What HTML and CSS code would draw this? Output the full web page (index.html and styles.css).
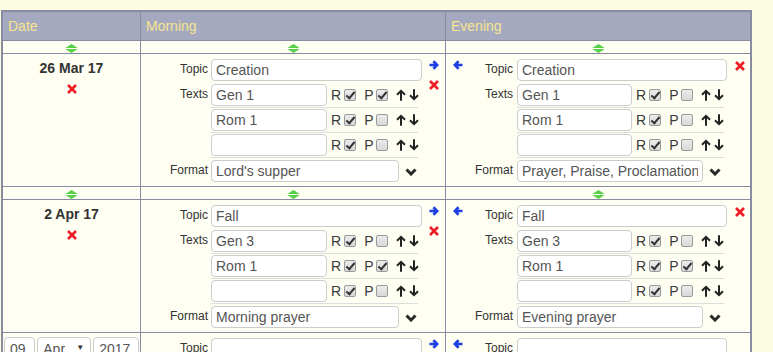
FILE: index.html
```html
<!DOCTYPE html>
<html lang="en">
<head>
    <meta charset="UTF-8">
    <title>Service Plan</title>
    <link rel="stylesheet" href="styles.css">
</head>
<body>
    <svg class="defs" xmlns="http://www.w3.org/2000/svg">
        <symbol id="i-move" viewBox="0 0 13 9"><path d="M0.3 3.9L6.5 0 12.7 3.9Z M0.3 5.1L6.5 9 12.7 5.1Z" fill="currentColor"/></symbol>
        <symbol id="i-right" viewBox="0 0 10 10"><path d="M0.5 5H8.2M4.4 1.2L8.2 5 4.4 8.8" fill="none" stroke="currentColor" stroke-width="2.7"/></symbol>
        <symbol id="i-left" viewBox="0 0 10 10"><path d="M9.5 5H1.8M5.6 1.2L1.8 5 5.6 8.8" fill="none" stroke="currentColor" stroke-width="2.7"/></symbol>
        <symbol id="i-del" viewBox="0 0 10 10"><path d="M1 1L9 9M9 1L1 9" fill="none" stroke="currentColor" stroke-width="2.6"/></symbol>
        <symbol id="i-up" viewBox="0 0 10 12"><path d="M5 11.8V1.8M1 5.8L5 1.8 9 5.8" fill="none" stroke="currentColor" stroke-width="2"/></symbol>
        <symbol id="i-down" viewBox="0 0 10 12"><path d="M5 0.2V10.2M1 6.2L5 10.2 9 6.2" fill="none" stroke="currentColor" stroke-width="2"/></symbol>
        <symbol id="i-chev" viewBox="0 0 12 8"><path d="M1.5 1.5L6 6 10.5 1.5" fill="none" stroke="currentColor" stroke-width="3"/></symbol>
    </svg>

    <table class="plan">
        <thead>
            <tr><th class="c-date">Date</th><th class="c-am">Morning</th><th class="c-pm">Evening</th></tr>
        </thead>
        <tbody>
            <tr class="mover">
                <td><svg class="mv"><use href="#i-move"/></svg></td>
                <td><svg class="mv"><use href="#i-move"/></svg></td>
                <td><svg class="mv"><use href="#i-move"/></svg></td>
            </tr>
            <tr class="day">
                <td class="date">
                    <div class="when">26 Mar 17</div>
                    <svg class="del date-del"><use href="#i-del"/></svg>
                </td>
                <td class="am">
                    <div class="slot">
                        <div class="fields">
                            <div class="field topic-row"><label>Topic</label><input class="txt topic" value="Creation"></div>
                            <div class="field"><label>Texts</label>
                                <div class="texts">
                                    <div class="text-row"><input class="txt ref" value="Gen 1"><span class="rp">R</span><input type="checkbox" checked><span class="rp p">P</span><input type="checkbox" checked><svg class="ud"><use href="#i-up"/></svg><svg class="ud dn"><use href="#i-down"/></svg></div>
                                    <div class="text-row"><input class="txt ref" value="Rom 1"><span class="rp">R</span><input type="checkbox" checked><span class="rp p">P</span><input type="checkbox"><svg class="ud"><use href="#i-up"/></svg><svg class="ud dn"><use href="#i-down"/></svg></div>
                                    <div class="text-row"><input class="txt ref" value=""><span class="rp">R</span><input type="checkbox" checked><span class="rp p">P</span><input type="checkbox"><svg class="ud"><use href="#i-up"/></svg><svg class="ud dn"><use href="#i-down"/></svg></div>
                                </div>
                            </div>
                            <div class="field fmt"><label>Format</label><input class="txt format" value="Lord's supper"><svg class="chev"><use href="#i-chev"/></svg></div>
                        </div>
                        <div class="side">
                            <svg class="go"><use href="#i-right"/></svg>
                            <svg class="del"><use href="#i-del"/></svg>
                        </div>
                    </div>
                </td>
                <td class="pm">
                    <div class="slot">
                        <div class="back"><svg class="go"><use href="#i-left"/></svg></div>
                        <div class="fields">
                            <div class="field topic-row"><label>Topic</label><input class="txt topic" value="Creation"></div>
                            <div class="field"><label>Texts</label>
                                <div class="texts">
                                    <div class="text-row"><input class="txt ref" value="Gen 1"><span class="rp">R</span><input type="checkbox" checked><span class="rp p">P</span><input type="checkbox"><svg class="ud"><use href="#i-up"/></svg><svg class="ud dn"><use href="#i-down"/></svg></div>
                                    <div class="text-row"><input class="txt ref" value="Rom 1"><span class="rp">R</span><input type="checkbox" checked><span class="rp p">P</span><input type="checkbox"><svg class="ud"><use href="#i-up"/></svg><svg class="ud dn"><use href="#i-down"/></svg></div>
                                    <div class="text-row"><input class="txt ref" value=""><span class="rp">R</span><input type="checkbox" checked><span class="rp p">P</span><input type="checkbox"><svg class="ud"><use href="#i-up"/></svg><svg class="ud dn"><use href="#i-down"/></svg></div>
                                </div>
                            </div>
                            <div class="field fmt"><label>Format</label><input class="txt format" value="Prayer, Praise, Proclamation"><svg class="chev"><use href="#i-chev"/></svg></div>
                        </div>
                        <div class="side-r"><svg class="del"><use href="#i-del"/></svg></div>
                    </div>
                </td>
            </tr>
            <tr class="mover">
                <td><svg class="mv"><use href="#i-move"/></svg></td>
                <td><svg class="mv"><use href="#i-move"/></svg></td>
                <td><svg class="mv"><use href="#i-move"/></svg></td>
            </tr>
            <tr class="day">
                <td class="date">
                    <div class="when">2 Apr 17</div>
                    <svg class="del date-del"><use href="#i-del"/></svg>
                </td>
                <td class="am">
                    <div class="slot">
                        <div class="fields">
                            <div class="field topic-row"><label>Topic</label><input class="txt topic" value="Fall"></div>
                            <div class="field"><label>Texts</label>
                                <div class="texts">
                                    <div class="text-row"><input class="txt ref" value="Gen 3"><span class="rp">R</span><input type="checkbox" checked><span class="rp p">P</span><input type="checkbox"><svg class="ud"><use href="#i-up"/></svg><svg class="ud dn"><use href="#i-down"/></svg></div>
                                    <div class="text-row"><input class="txt ref" value="Rom 1"><span class="rp">R</span><input type="checkbox" checked><span class="rp p">P</span><input type="checkbox" checked><svg class="ud"><use href="#i-up"/></svg><svg class="ud dn"><use href="#i-down"/></svg></div>
                                    <div class="text-row"><input class="txt ref" value=""><span class="rp">R</span><input type="checkbox" checked><span class="rp p">P</span><input type="checkbox"><svg class="ud"><use href="#i-up"/></svg><svg class="ud dn"><use href="#i-down"/></svg></div>
                                </div>
                            </div>
                            <div class="field fmt"><label>Format</label><input class="txt format" value="Morning prayer"><svg class="chev"><use href="#i-chev"/></svg></div>
                        </div>
                        <div class="side">
                            <svg class="go"><use href="#i-right"/></svg>
                            <svg class="del"><use href="#i-del"/></svg>
                        </div>
                    </div>
                </td>
                <td class="pm">
                    <div class="slot">
                        <div class="back"><svg class="go"><use href="#i-left"/></svg></div>
                        <div class="fields">
                            <div class="field topic-row"><label>Topic</label><input class="txt topic" value="Fall"></div>
                            <div class="field"><label>Texts</label>
                                <div class="texts">
                                    <div class="text-row"><input class="txt ref" value="Gen 3"><span class="rp">R</span><input type="checkbox" checked><span class="rp p">P</span><input type="checkbox"><svg class="ud"><use href="#i-up"/></svg><svg class="ud dn"><use href="#i-down"/></svg></div>
                                    <div class="text-row"><input class="txt ref" value="Rom 1"><span class="rp">R</span><input type="checkbox" checked><span class="rp p">P</span><input type="checkbox" checked><svg class="ud"><use href="#i-up"/></svg><svg class="ud dn"><use href="#i-down"/></svg></div>
                                    <div class="text-row"><input class="txt ref" value=""><span class="rp">R</span><input type="checkbox" checked><span class="rp p">P</span><input type="checkbox"><svg class="ud"><use href="#i-up"/></svg><svg class="ud dn"><use href="#i-down"/></svg></div>
                                </div>
                            </div>
                            <div class="field fmt"><label>Format</label><input class="txt format" value="Evening prayer"><svg class="chev"><use href="#i-chev"/></svg></div>
                        </div>
                        <div class="side-r"><svg class="del"><use href="#i-del"/></svg></div>
                    </div>
                </td>
            </tr>
            <tr class="day new">
                <td class="date">
                    <div class="pick">
                        <select class="sel day-sel"><option>09</option></select>
                        <span class="month"><select class="sel mon-sel"><option>Apr</option></select></span>
                        <select class="sel yr-sel"><option>2017</option></select>
                    </div>
                </td>
                <td class="am">
                    <div class="slot">
                        <div class="fields">
                            <div class="field topic-row"><label>Topic</label><input class="txt topic" value=""></div>
                            <div class="field"><label>Texts</label>
                                <div class="texts">
                                    <div class="text-row"><input class="txt ref" value=""><span class="rp">R</span><input type="checkbox" checked><span class="rp p">P</span><input type="checkbox"><svg class="ud"><use href="#i-up"/></svg><svg class="ud dn"><use href="#i-down"/></svg></div>
                                </div>
                            </div>
                        </div>
                        <div class="side">
                            <svg class="go"><use href="#i-right"/></svg>
                        </div>
                    </div>
                </td>
                <td class="pm">
                    <div class="slot">
                        <div class="back"><svg class="go"><use href="#i-left"/></svg></div>
                        <div class="fields">
                            <div class="field topic-row"><label>Topic</label><input class="txt topic" value=""></div>
                        </div>
                    </div>
                </td>
            </tr>
        </tbody>
    </table>
</body>
</html>
```

FILE: styles.css
```css
body {
    margin: 0;
    padding: 10px 0 20px 1px;
    background-color: #fcfce3;
    font-family: "Liberation Sans", Arial, sans-serif;
    font-size: 14px;
    color: #333;
}
.defs {
    display: none;
}
.plan {
    border-collapse: separate;
    border-spacing: 0;
    table-layout: fixed;
    width: 751px;
    box-sizing: border-box;
    border: 2px solid #878ca0;
    background-color: #fefef2;
}
.plan th,
.plan td {
    box-sizing: border-box;
    border-right: 1px solid #878ca0;
    border-bottom: 1px solid #878ca0;
    padding: 0;
}
.plan th:last-child,
.plan td:last-child {
    border-right: 0;
}
.plan th {
    height: 29px;
    padding: 0 5px;
    background-color: #a4a9bf;
    color: #f6e58e;
    font-weight: normal;
    text-align: left;
}
.c-date { width: 138px; }
.c-am { width: 305px; }
.c-pm { width: 304px; }

.plan td {
    vertical-align: top;
}
.plan .mover td {
    height: 13px;
    padding-top: 3px;
    line-height: 0;
}
.mv {
    display: block;
    width: 13px;
    height: 9px;
    margin: 0 auto;
    color: #59d04a;
}

.plan .date {
    text-align: center;
    padding-top: 6px;
}
.when {
    font-weight: bold;
    line-height: 16px;
}
.del {
    display: block;
    width: 10px;
    height: 10px;
    color: #ef1c25;
}
.date-del {
    margin: 8px auto 0;
}

.slot {
    display: flex;
    padding: 5px 0 4px;
}
.field {
    display: flex;
    align-items: flex-start;
}
.field label {
    flex: none;
    text-align: right;
    font-size: 12px;
    line-height: 15px;
    padding-top: 3px;
}
.am .field label {
    width: 67px;
    margin-right: 3px;
}
.pm .field label {
    width: 50px;
    margin-right: 4px;
}
.topic-row {
    margin-bottom: 3px;
}

.txt {
    flex: none;
    height: 22px;
    box-sizing: border-box;
    margin: 0;
    padding: 0 4px;
    border: 1px solid #ccc;
    border-radius: 4px;
    background-color: #fff;
    font-family: "Liberation Sans", Arial, sans-serif;
    font-size: 14px;
    color: #555;
}
.am .topic { width: 211px; }
.pm .topic { width: 210px; }
.am .ref { width: 116px; }
.pm .ref { width: 115px; }
.am .format { width: 188px; }
.pm .format { width: 186px; }

.text-row {
    display: flex;
    align-items: center;
    width: 207px;
    padding-bottom: 1px;
    border-bottom: 1px solid #ddd;
    margin-bottom: 1px;
}
.rp {
    margin-left: 4px;
    color: #3a3a3a;
}
.rp.p {
    margin-left: 8px;
}
.text-row input[type="checkbox"] {
    appearance: none;
    -webkit-appearance: none;
    position: relative;
    flex: none;
    width: 12px;
    height: 12px;
    margin: 0 0 0 3px;
    border: 1px solid #9a9a9a;
    border-radius: 2px;
    background: linear-gradient(#ececec, #d8d8d8);
}
.text-row input[type="checkbox"]:checked::after {
    content: "";
    position: absolute;
    left: 3px;
    top: 0;
    width: 3px;
    height: 7px;
    border: solid #333;
    border-width: 0 2px 2px 0;
    transform: rotate(40deg);
}
.ud {
    flex: none;
    width: 10px;
    height: 12px;
    margin-left: 8px;
    color: #222;
}
.ud.dn {
    margin-left: 3px;
}

.fmt {
    margin-top: 1px;
}
.chev {
    flex: none;
    width: 12px;
    height: 8px;
    margin: 8px 0 0 6px;
    color: #2a2a2a;
}

.go {
    display: block;
    width: 10px;
    height: 10px;
    color: #1e3fe4;
}
.side {
    margin-left: 7px;
    padding-top: 1px;
}
.side .del {
    margin-top: 10px;
}
.back {
    flex: none;
    width: 17px;
    padding: 1px 0 0 7px;
    box-sizing: border-box;
}
.side-r {
    margin-left: 8px;
    padding-top: 2px;
}

.plan .new .date {
    padding: 4px 1px 0;
}
.pick {
    display: flex;
    gap: 2px;
}
.sel {
    appearance: none;
    -webkit-appearance: none;
    height: 24px;
    box-sizing: border-box;
    margin: 0;
    padding: 0 5px;
    border: 1px solid #ccc;
    border-radius: 4px;
    background-color: #fff;
    font-family: "Liberation Sans", Arial, sans-serif;
    font-size: 14px;
    color: #555;
}
.day-sel { width: 32px; }
.yr-sel { width: 47px; }
.month {
    position: relative;
}
.mon-sel { width: 54px; }
.month::after {
    content: "\25BC";
    position: absolute;
    right: 7px;
    top: 6px;
    font-size: 8px;
    color: #333;
}
```
